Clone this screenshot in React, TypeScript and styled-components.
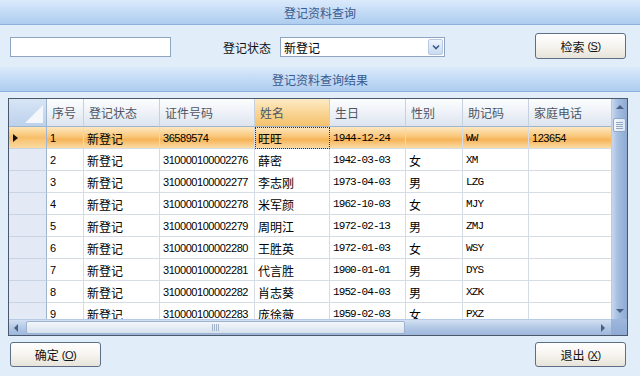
import styled, { createGlobalStyle, css } from 'styled-components';

const GlobalStyle = createGlobalStyle`
  html, body {
    margin: 0;
    padding: 0;
    background: #e2edfa;
  }
  * {
    box-sizing: border-box;
  }
`;

const cjk = `"Noto Sans CJK SC", "DejaVu Sans", sans-serif`;

const Page = styled.div`
  width: 640px;
  height: 376px;
  display: flex;
  flex-direction: column;
  background: #e2edfa;
  font-family: ${cjk};
  font-size: 12px;
  color: #000;
  overflow: hidden;
`;

const TitleBar = styled.div<{ $h: number }>`
  height: ${(p) => p.$h}px;
  flex-shrink: 0;
  display: flex;
  align-items: center;
  justify-content: center;
  background: linear-gradient(to bottom, #dbeafb 0%, #c3dbf6 50%, #aecdef 100%);
  border-bottom: 1px solid #8db0dc;
  color: #3a5a8e;
  font-size: 12px;
`;

const SearchRow = styled.div`
  height: 42px;
  flex-shrink: 0;
  display: flex;
  align-items: center;
  padding: 0 14px 0 10px;
`;

const TextInput = styled.div`
  width: 161px;
  height: 20px;
  background: #fff;
  border: 1px solid #8fa5bf;
  margin-top: 2px;
`;

const Label = styled.span`
  margin-left: 52px;
  margin-right: 9px;
  margin-top: 2px;
  color: #111;
`;

const Combo = styled.div`
  width: 165px;
  height: 20px;
  margin-top: 2px;
  display: flex;
  align-items: center;
  background: #fff;
  border: 1px solid #8fa5bf;
  padding-left: 3px;
`;

const ComboText = styled.span`
  flex: 1;
`;

const ComboArrow = styled.div`
  width: 15px;
  height: 16px;
  margin-right: 1px;
  display: flex;
  align-items: center;
  justify-content: center;
  border: 1px solid #b7c9e3;
  border-radius: 2px;
  background: linear-gradient(to bottom, #eef4fc, #c9daf2);
`;

const Button = styled.div<{ $h: number }>`
  width: 91px;
  height: ${(p) => p.$h}px;
  display: flex;
  align-items: center;
  justify-content: center;
  border: 1px solid #5d6e86;
  border-radius: 3px;
  background: linear-gradient(to bottom, #ffffff 0%, #f6f4ef 50%, #e7e3da 100%);
  font-size: 12px;
  color: #111;
  gap: 3px;
`;

const Mnemonic = styled.span`
  font-family: "Liberation Sans", sans-serif;
  font-size: 11px;
  letter-spacing: -0.5px;
  u {
    text-decoration: underline;
  }
`;

const Spacer = styled.div`
  flex: 1;
`;

const GridWrap = styled.div`
  padding: 6px 12px 0 8px;
  flex-shrink: 0;
`;

const GridFrame = styled.div`
  width: 620px;
  height: 238px;
  border: 1px solid #4b586c;
  display: flex;
  flex-direction: column;
  background: #fff;
  overflow: hidden;
`;

const GridMain = styled.div`
  flex: 1;
  display: flex;
  min-height: 0;
`;

const TableArea = styled.div`
  flex: 1;
  overflow: hidden;
  display: flex;
  flex-direction: column;
`;

const cols = [38, 37, 76, 95, 75, 76, 57, 66, 86];

const Row = styled.div<{ $h: number }>`
  display: grid;
  grid-template-columns: ${cols.map((c) => c + 'px').join(' ')};
  height: ${(p) => p.$h}px;
  flex-shrink: 0;
`;

const Corner = styled.div`
  position: relative;
  background: linear-gradient(to bottom, #d8e5f5, #bcd1ec);
  border-right: 1px solid #9fb4cf;
  border-bottom: 1px solid #9fb4cf;
  overflow: hidden;
  &::after {
    content: '';
    position: absolute;
    right: 3px;
    bottom: 3px;
    width: 0;
    height: 0;
    border-left: 18px solid transparent;
    border-bottom: 18px solid #f4f8fd;
  }
`;

const HeadCell = styled.div<{ $active?: boolean }>`
  display: flex;
  align-items: center;
  padding-left: 5px;
  color: #4e5563;
  border-right: 1px solid #c6d0de;
  border-bottom: 1px solid #9fb4cf;
  background: ${(p) =>
    p.$active
      ? 'linear-gradient(to bottom, #fdebc6 0%, #f9d595 50%, #f4c16c 100%)'
      : 'linear-gradient(to bottom, #fcfdfe 0%, #eef2f8 50%, #dde4ee 100%)'};
`;

const RowHead = styled.div<{ $sel?: boolean }>`
  display: flex;
  align-items: center;
  padding-left: 4px;
  border-right: 1px solid #9fb4cf;
  border-bottom: 1px solid #c8d4e4;
  background: ${(p) =>
    p.$sel
      ? 'linear-gradient(to bottom, #fde6b5 0%, #f7bf6a 50%, #fbd9a0 100%)'
      : '#e3eaf5'};
`;

const selBg = css`
  background: linear-gradient(to bottom, #fde8c0 0%, #f9c77a 45%, #f6b457 60%, #fcdca6 100%);
`;

const Cell = styled.div<{ $sel?: boolean; $font?: 'mono' | 'sans'; $focus?: boolean }>`
  display: flex;
  align-items: center;
  padding-left: 3px;
  padding-top: 1px;
  border-right: 1px solid #d6dce6;
  border-bottom: 1px solid #d6dce6;
  white-space: nowrap;
  overflow: hidden;
  ${(p) => (p.$sel ? selBg : 'background: #fff;')}
  ${(p) =>
    p.$font === 'mono' &&
    css`
      font-family: "Liberation Mono", monospace;
      font-size: 11px;
      letter-spacing: -0.9px;
    `}
  ${(p) =>
    p.$font === 'sans' &&
    css`
      font-family: "Liberation Sans", sans-serif;
      font-size: 11px;
      letter-spacing: -0.45px;
    `}
  ${(p) =>
    p.$focus &&
    css`
      outline: 1px dotted #333;
      outline-offset: -1px;
    `}
`;

const VScroll = styled.div`
  width: 16px;
  flex-shrink: 0;
  position: relative;
  background: linear-gradient(to right, #c7d7ee 0%, #a4bde0 40%, #8eaad4 100%);
  border-left: 1px solid #b8cbe6;
`;

const VThumb = styled.div`
  position: absolute;
  left: 1px;
  top: 19px;
  width: 13px;
  height: 14px;
  border: 1px solid #8ea6c8;
  border-radius: 2px;
  background: linear-gradient(to right, #f5f8fc, #dbe5f2);
  display: flex;
  flex-direction: column;
  justify-content: center;
  align-items: center;
  gap: 1px;
  span {
    display: block;
    width: 7px;
    height: 1px;
    background: #93a6c2;
  }
`;

const ArrowGlyph = styled.div<{ $dir: 'up' | 'down' | 'left' | 'right' }>`
  position: absolute;
  width: 0;
  height: 0;
  ${(p) =>
    p.$dir === 'up' &&
    css`
      top: 6px;
      left: 4px;
      border-left: 4px solid transparent;
      border-right: 4px solid transparent;
      border-bottom: 4px solid #4b5f82;
    `}
  ${(p) =>
    p.$dir === 'down' &&
    css`
      bottom: 6px;
      left: 4px;
      border-left: 4px solid transparent;
      border-right: 4px solid transparent;
      border-top: 4px solid #4b5f82;
    `}
  ${(p) =>
    p.$dir === 'left' &&
    css`
      left: 5px;
      top: 4px;
      border-top: 4px solid transparent;
      border-bottom: 4px solid transparent;
      border-right: 4px solid #4b5f82;
    `}
  ${(p) =>
    p.$dir === 'right' &&
    css`
      right: 6px;
      top: 4px;
      border-top: 4px solid transparent;
      border-bottom: 4px solid transparent;
      border-left: 4px solid #4b5f82;
    `}
`;

const HBarRow = styled.div`
  height: 16px;
  flex-shrink: 0;
  display: flex;
`;

const HScroll = styled.div`
  flex: 1;
  position: relative;
  background: linear-gradient(to bottom, #d2e0f2 0%, #b4c9e6 50%, #9db7dc 100%);
  border-top: 1px solid #b8cbe6;
`;

const HThumb = styled.div`
  position: absolute;
  left: 17px;
  top: 1px;
  width: 379px;
  height: 13px;
  border: 1px solid #9fb3cf;
  border-radius: 2px;
  background: linear-gradient(to bottom, #f4f7fb, #d6e1ef);
  display: flex;
  justify-content: center;
  align-items: center;
  gap: 1px;
  span {
    display: block;
    width: 1px;
    height: 7px;
    background: #a2b2c8;
  }
`;

const ScrollCorner = styled.div`
  width: 16px;
  background: linear-gradient(to bottom, #9db7dc, #8eaad4);
`;

const Footer = styled.div`
  flex: 1;
  display: flex;
  align-items: flex-start;
  padding: 6px 14px 0 10px;
`;

const SelMark = styled.span`
  width: 0;
  height: 0;
  border-top: 4px solid transparent;
  border-bottom: 4px solid transparent;
  border-left: 5px solid #111;
`;

type Rec = [string, string, string, string, string, string, string, string];

const data: Rec[] = [
  ['1', '新登记', '36589574', '旺旺', '1944-12-24', '', 'WW', '123654'],
  ['2', '新登记', '310000100002276', '薛密', '1942-03-03', '女', 'XM', ''],
  ['3', '新登记', '310000100002277', '李志刚', '1973-04-03', '男', 'LZG', ''],
  ['4', '新登记', '310000100002278', '米军颜', '1962-10-03', '女', 'MJY', ''],
  ['5', '新登记', '310000100002279', '周明江', '1972-02-13', '男', 'ZMJ', ''],
  ['6', '新登记', '310000100002280', '王胜英', '1972-01-03', '女', 'WSY', ''],
  ['7', '新登记', '310000100002281', '代言胜', '1900-01-01', '男', 'DYS', ''],
  ['8', '新登记', '310000100002282', '肖志葵', '1952-04-03', '男', 'XZK', ''],
  ['9', '新登记', '310000100002283', '庞徐薇', '1959-02-03', '女', 'PXZ', ''],
];

const headers = ['序号', '登记状态', '证件号码', '姓名', '生日', '性别', '助记码', '家庭电话'];

const App = () => {
  return (
    <Page>
      <GlobalStyle />
      <TitleBar $h={25}>登记资料查询</TitleBar>
      <SearchRow>
        <TextInput />
        <Label>登记状态</Label>
        <Combo>
          <ComboText>新登记</ComboText>
          <ComboArrow>
            <svg width="8" height="6" viewBox="0 0 8 6">
              <path d="M1 1.5 L4 4.5 L7 1.5" fill="none" stroke="#3c5a8a" strokeWidth="1.6" />
            </svg>
          </ComboArrow>
        </Combo>
        <Spacer />
        <Button $h={26}>
          检索 <Mnemonic>(<u>S</u>)</Mnemonic>
        </Button>
      </SearchRow>
      <TitleBar $h={25}>登记资料查询结果</TitleBar>
      <GridWrap>
        <GridFrame>
          <GridMain>
            <TableArea>
              <Row $h={28}>
                <Corner />
                {headers.map((h) => (
                  <HeadCell key={h} $active={h === '姓名'}>
                    {h}
                  </HeadCell>
                ))}
              </Row>
              {data.map((r, i) => {
                const sel = i === 0;
                return (
                  <Row $h={22} key={r[0]}>
                    <RowHead $sel={sel}>{sel && <SelMark />}</RowHead>
                    <Cell $sel={sel} $font="sans">{r[0]}</Cell>
                    <Cell $sel={sel}>{r[1]}</Cell>
                    <Cell $sel={sel} $font="sans">{r[2]}</Cell>
                    <Cell $sel={sel} $focus={sel}>{r[3]}</Cell>
                    <Cell $sel={sel} $font="mono">{r[4]}</Cell>
                    <Cell $sel={sel}>{r[5]}</Cell>
                    <Cell $sel={sel} $font="mono">{r[6]}</Cell>
                    <Cell $sel={sel} $font="sans">{r[7]}</Cell>
                  </Row>
                );
              })}
            </TableArea>
            <VScroll>
              <ArrowGlyph $dir="up" />
              <VThumb>
                <span />
                <span />
                <span />
                <span />
              </VThumb>
              <ArrowGlyph $dir="down" />
            </VScroll>
          </GridMain>
          <HBarRow>
            <HScroll>
              <ArrowGlyph $dir="left" />
              <HThumb>
                <span />
                <span />
                <span />
                <span />
              </HThumb>
              <ArrowGlyph $dir="right" />
            </HScroll>
            <ScrollCorner />
          </HBarRow>
        </GridFrame>
      </GridWrap>
      <Footer>
        <Button $h={25}>
          确定 <Mnemonic>(<u>O</u>)</Mnemonic>
        </Button>
        <Spacer />
        <Button $h={25}>
          退出 <Mnemonic>(<u>X</u>)</Mnemonic>
        </Button>
      </Footer>
    </Page>
  );
};

export default App;
